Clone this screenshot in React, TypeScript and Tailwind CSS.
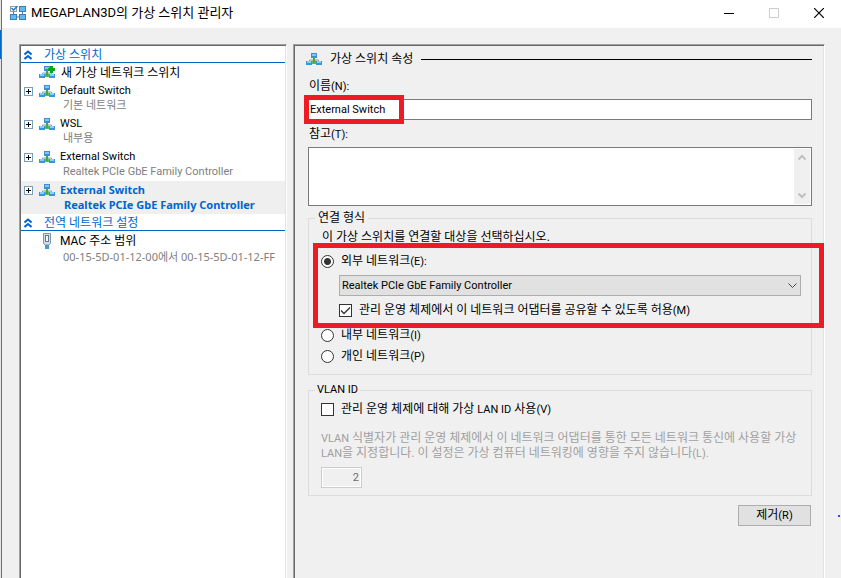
import { ReactNode, useState } from "react";

type TreeItemProps = {
    title: string;
    detail: string;
    selected?: boolean;
};

function SwitchIcon({ plus = false }: { plus?: boolean }) {
    return (
        <svg width="16" height="13" viewBox="0 0 16 13" className="shrink-0" aria-hidden="true">
            <path d="M3.500 8.500v-1.500h9v1.500" fill="none" stroke="#8d9aa5" />
            <path d="M7 4h2v3l1.500 2v2h-5v-2l1.500-2z" fill="#58bf4f" />
            <path d="M8 5v5" stroke="#2f9430" />
            <rect x="5" y="0" width="6" height="5" fill="#3d8fd0" />
            <rect x="6" y="1" width="4" height="2" fill="#7cc8f2" />
            <rect x="0" y="8" width="6" height="4" fill="#3596dc" />
            <rect x="1" y="8" width="4" height="2" fill="#84d2f7" />
            <rect x="10" y="8" width="6" height="4" fill="#3596dc" />
            <rect x="11" y="8" width="4" height="2" fill="#84d2f7" />
            {plus && <path d="M11 0h3v2h2v3h-2v2h-3v-2h-2v-3h2z" fill="#12a312" />}
        </svg>
    );
}

function AppIcon() {
    return (
        <svg width="16" height="14" viewBox="0 0 16 14" aria-hidden="true">
            <path d="M3.500 6v3M12.500 5v4M6 11h4" stroke="#5d7d92" />
            <rect x="0.500" y="0.500" width="6" height="5" fill="#fff" stroke="#9a9a9a" />
            <rect x="9.500" y="0.500" width="6" height="5" fill="#5fb9f2" stroke="#3a80b4" />
            <rect x="0.500" y="8.500" width="6" height="5" fill="#5fb9f2" stroke="#3a80b4" />
            <rect x="9.500" y="8.500" width="6" height="5" fill="#5fb9f2" stroke="#3a80b4" />
            <path d="M1.500 2l2 2.200l4-4.200" stroke="#1e7fd0" strokeWidth="1.600" fill="none" />
        </svg>
    );
}

function AdapterIcon() {
    return (
        <svg width="10" height="16" viewBox="0 0 10 16" className="shrink-0" aria-hidden="true">
            <path d="M1.500 0.500h7v10l-2 1.500h-3l-2-1.500z" fill="#d5dde5" stroke="#8496a8" />
            <rect x="3.500" y="2.500" width="3" height="6" fill="#f5f8fa" stroke="#66788a" />
            <rect x="3" y="12" width="4" height="4" fill="#3f9ed0" />
        </svg>
    );
}

function SectionTitle({ children }: { children: ReactNode }) {
    return (
        <h2 className="flex h-[17px] items-center gap-3 border-b border-[#0066cc] pl-[3px] pt-px text-[#0066cc]">
            <svg width="8" height="10" viewBox="0 0 8 10" fill="none" stroke="#0066cc" strokeWidth="2" aria-hidden="true">
                <path d="M0.500 4.500L4 1.500l3.500 3M0.500 9L4 6l3.500 3" />
            </svg>
            {children}
        </h2>
    );
}

// Access keys and Latin words sit slightly smaller than the Korean text
function Latin({ children }: { children: ReactNode }) {
    return <span className="text-[11px]">{children}</span>;
}

function TreeItem({ title, detail, selected = false }: TreeItemProps) {
    return (
        <li className={selected ? "bg-[#efefef] font-['Noto_Sans','Noto_Sans_CJK_KR',sans-serif] font-bold text-[#0066cc]" : ""}>
            <div className="flex h-[18px] items-center pl-[3px]">
                <button type="button" aria-label="+" className="flex size-[9px] shrink-0 items-center justify-center border border-[#7b9ebd] bg-white">
                    <svg width="5" height="5" viewBox="0 0 5 5" stroke="#000" aria-hidden="true">
                        <path d="M0 2.500h5M2.500 0v5" />
                    </svg>
                </button>
                <span className="ml-[6px] mr-[5px] flex">
                    <SwitchIcon />
                </span>
                <span className="text-[11px]">{title}</span>
            </div>
            <div className={selected ? "h-[15px] pl-[43px] text-[11px] leading-3" : "h-[15px] pl-[42px] text-[11px] leading-3 text-[#808080]"}>{detail}</div>
        </li>
    );
}

export default function App() {
    const [name, setName] = useState("External Switch");
    const [notes, setNotes] = useState("");
    const [network, setNetwork] = useState("external");
    const [shared, setShared] = useState(true);
    const [vlan, setVlan] = useState(false);

    const radioClass = "size-[13px] appearance-none rounded-full border border-[#333] bg-white checked:bg-[radial-gradient(circle,#333_0_3px,#fff_4px)]";

    return (
        <div className="relative flex h-screen overflow-hidden bg-[#f0f0f0] font-[Roboto,'Noto_Sans_CJK_KR',sans-serif] text-xs leading-4 text-black">
            <div className="w-[2px] shrink-0 border-r border-[#707070] bg-[#e5e5e5] pt-[30px]">
                <div className="h-[29px] bg-[#0066cc]" />
            </div>
            <div className="flex min-w-0 flex-1 flex-col">
                <header className="flex h-7 shrink-0 items-center bg-white pb-[3px] pl-2">
                    <AppIcon />
                    <h1 className="ml-[5px] flex-1 text-[13px]">MEGAPLAN3D의 가상 스위치 관리자</h1>
                    <button type="button" aria-label="최소화" className="flex h-6 w-[45px] items-center justify-center">
                        <svg width="10" height="10" viewBox="0 0 10 10" stroke="#000"><path d="M0 5.500h10" /></svg>
                    </button>
                    <button type="button" aria-label="최대화" disabled className="flex h-6 w-[45px] items-center justify-center">
                        <svg width="10" height="10" viewBox="0 0 10 10" fill="none" stroke="#ccc"><path d="M0.500 0.500h9v9h-9z" /></svg>
                    </button>
                    <button type="button" aria-label="닫기" className="flex h-6 w-[45px] items-center justify-center">
                        <svg width="10" height="10" viewBox="0 0 10 10" stroke="#000" strokeWidth="1.200"><path d="M0 0l10 10M10 0l-10 10" /></svg>
                    </button>
                </header>

                <div className="flex min-h-0 flex-1 gap-[6px] pl-[17px] pr-4 pt-4">
                    <nav className="w-[268px] shrink-0 border-l border-r border-t border-l-[#a0a0a0] border-r-white border-t-[#a0a0a0] bg-white px-px pt-px shadow-[inset_1px_1px_0_#696969,inset_-1px_0_0_#e3e3e3]">
                        <SectionTitle>가상 스위치</SectionTitle>
                        <div className="flex h-[19px] items-center gap-[6px] pl-[18px]">
                            <SwitchIcon plus />
                            새 가상 네트워크 스위치
                        </div>
                        <ul>
                            <TreeItem title="Default Switch" detail="기본 네트워크" />
                            <TreeItem title="WSL" detail="내부용" />
                            <TreeItem title="External Switch" detail="Realtek PCIe GbE Family Controller" />
                            <TreeItem title="External Switch" detail="Realtek PCIe GbE Family Controller" selected />
                        </ul>
                        <SectionTitle>전역 네트워크 설정</SectionTitle>
                        <div className="flex gap-2 pl-[21px] pt-[2px]">
                            <AdapterIcon />
                            MAC 주소 범위
                        </div>
                        <div className="pl-[42px] font-['Noto_Sans','Noto_Sans_CJK_KR',sans-serif] text-[11px] leading-4 text-[#808080]">00-15-5D-01-12-00에서 00-15-5D-01-12-FF</div>
                    </nav>

                    <main className="min-w-0 flex-1 border-l border-r border-t border-l-[#a0a0a0] border-r-white border-t-[#a0a0a0] pl-[14px] pr-3 pt-[5px] shadow-[inset_1px_1px_0_#696969,inset_-1px_0_0_#e3e3e3]">
                        <h2 className="-ml-[2px] flex h-[18px] items-center gap-2">
                            <SwitchIcon />
                            가상 스위치 속성
                            <span className="h-px flex-1 bg-black" />
                        </h2>
                        <label htmlFor="name" className="mt-[10px] block h-[21px] pl-px">이름<Latin>(N):</Latin></label>
                        <div className="relative">
                            <input id="name" value={name} onChange={(e) => setName(e.target.value)} className="block h-[21px] w-full border border-[#7a7a7a] bg-white px-px text-[11px] outline-none" />
                            <div className="pointer-events-none absolute -left-1 -top-1 h-[29px] w-[100px] border-5 border-[#ed1c24]" />
                        </div>
                        <label htmlFor="notes" className="mt-[6px] block h-[21px] pl-px">참고<Latin>(T):</Latin></label>
                        <div className="flex h-[59px] border border-[#7a7a7a] bg-white p-px">
                            <textarea id="notes" value={notes} onChange={(e) => setNotes(e.target.value)} className="min-w-0 flex-1 resize-none outline-none" />
                            <div className="flex w-4 flex-col items-center justify-between bg-[#f0f0f0] py-[5px]">
                                <svg width="8" height="7" viewBox="0 0 8 7" fill="none" stroke="#bfbfbf" strokeWidth="2"><path d="M0.500 5.500l3.500-3.500l3.500 3.500" /></svg>
                                <svg width="8" height="7" viewBox="0 0 8 7" fill="none" stroke="#bfbfbf" strokeWidth="2"><path d="M0.500 1.500l3.500 3.500l3.500-3.500" /></svg>
                            </div>
                        </div>

                        <fieldset className="mt-1 h-[165px] border border-[#dcdcdc] pl-3 pr-[10px]">
                            <legend className="-ml-[6px] px-[3px]">연결 형식</legend>
                            <p className="h-[21px] pl-px pt-[3px]">이 가상 스위치를 연결할 대상을 선택하십시오.</p>
                            <div className="relative">
                                <label className="flex h-7 items-center gap-[7px]">
                                    <input type="radio" name="network" checked={network === "external"} onChange={() => setNetwork("external")} className={radioClass} />
                                    <span>외부 네트워크<Latin>(E):</Latin></span>
                                </label>
                                <div className="relative ml-[18px]">
                                    <select aria-label="외부 네트워크" className="block h-[21px] w-full appearance-none border border-[#adadad] bg-[#e1e1e1] px-[2px] text-[11px]">
                                        <option>Realtek PCIe GbE Family Controller</option>
                                    </select>
                                    <svg width="9" height="6" viewBox="0 0 9 6" fill="none" stroke="#444" className="pointer-events-none absolute right-1 top-2"><path d="M0.500 0.500l4 4l4-4" /></svg>
                                </div>
                                <label className="ml-[18px] flex h-[29px] items-center gap-[7px]">
                                    <span className="relative flex">
                                        <input type="checkbox" checked={shared} onChange={(e) => setShared(e.target.checked)} className="size-[13px] appearance-none border border-[#333] bg-white" />
                                        {shared && <svg width="13" height="13" viewBox="0 0 13 13" fill="none" stroke="#333" strokeWidth="1.300" className="pointer-events-none absolute inset-0"><path d="M2 6.500l3 3l6-6" /></svg>}
                                    </span>
                                    <span>관리 운영 체제에서 이 네트워크 어댑터를 공유할 수 있도록 허용<Latin>(M)</Latin></span>
                                </label>
                                <div className="pointer-events-none absolute -left-2 -right-[23px] -top-1 h-[85px] border-5 border-[#ed1c24]" />
                            </div>
                            <label className="flex h-[21px] items-center gap-[7px]">
                                <input type="radio" name="network" checked={network === "internal"} onChange={() => setNetwork("internal")} className={radioClass} />
                                <span>내부 네트워크<Latin>(I)</Latin></span>
                            </label>
                            <label className="flex h-[21px] items-center gap-[7px]">
                                <input type="radio" name="network" checked={network === "private"} onChange={() => setNetwork("private")} className={radioClass} />
                                <span>개인 네트워크<Latin>(P)</Latin></span>
                            </label>
                        </fieldset>

                        <fieldset className="mt-[7px] h-[114px] border border-[#dcdcdc] px-3">
                            <legend className="-ml-[6px] px-[2px] text-[11px]">VLAN ID</legend>
                            <label className="flex h-[22px] items-center gap-[7px]">
                                <input type="checkbox" checked={vlan} onChange={(e) => setVlan(e.target.checked)} className="size-[13px] appearance-none border border-[#333] bg-white" />
                                <span>관리 운영 체제에 대해 가상 <Latin>LAN ID</Latin> 사용<Latin>(V)</Latin></span>
                            </label>
                            <p id="vlan-help" className="mt-[11px] leading-[14px] text-[#a0a0a0]"><Latin>VLAN</Latin> 식별자가 관리 운영 체제에서 이 네트워크 어댑터를 통한 모든 네트워크 통신에 사용할 가상 <Latin>LAN</Latin>을 지정합니다. 이 설정은 가상 컴퓨터 네트워킹에 영향을 주지 않습니다<Latin>(L).</Latin></p>
                            <input aria-describedby="vlan-help" aria-label="VLAN ID" disabled defaultValue="2" className="mt-[6px] block h-[21px] w-[41px] border border-[#ccc] bg-[#f0f0f0] px-[2px] text-right text-[11px] text-[#6d6d6d] shadow-[inset_0_0_0_1px_#fff]" />
                        </fieldset>
                        <div className="flex justify-end pr-px pt-[9px]">
                            <button type="button" className="h-[21px] w-[73px] border border-[#adadad] bg-[#e1e1e1]">제거<Latin>(R)</Latin></button>
                        </div>
                    </main>
                </div>
            </div>
            <span className="absolute right-px top-[515px] size-[2px] bg-[#4040ff]" />
        </div>
    );
}
